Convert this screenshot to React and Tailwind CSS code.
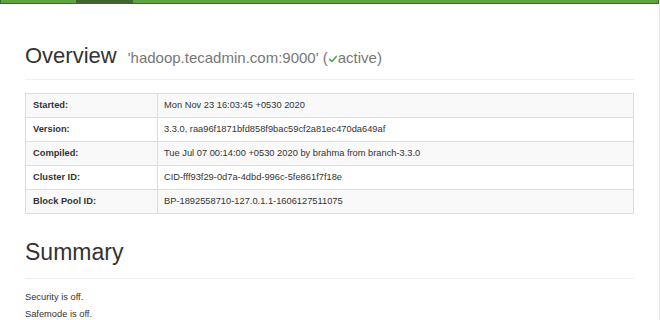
import React from "react";

const info = [
  ["Started:", "Mon Nov 23 16:03:45 +0530 2020"],
  ["Version:", "3.3.0, raa96f1871bfd858f9bac59cf2a81ec470da649af"],
  ["Compiled:", "Tue Jul 07 00:14:00 +0530 2020 by brahma from branch-3.3.0"],
  ["Cluster ID:", "CID-fff93f29-0d7a-4dbd-996c-5fe861f7f18e"],
  ["Block Pool ID:", "BP-1892558710-127.0.1.1-1606127511075"],
];

const App = () => {
  return (
    <div
      className="w-[660px] h-[320px] overflow-hidden bg-white border-r border-[#e4e4e4] text-[#333]"
      style={{ fontFamily: '"Liberation Sans", Arial, sans-serif' }}
    >
      <div className="h-[4px] flex bg-[#5fa33e] border-x border-b border-[#3d6a2b]">
        <div className="w-[75px]" />
        <div className="w-[57px] bg-[#42662f]" />
      </div>

      <div className="px-[25px]">
        <div className="mt-[40px] pb-[11px] border-b border-[#eeeeee] flex items-baseline">
          <h1 className="text-[22px] leading-[24px] font-normal">Overview</h1>
          <span className="ml-[11px] text-[15px] leading-[17px] text-[#777]">
            'hadoop.tecadmin.com:9000' (
            <svg viewBox="0 0 12 12" className="inline-block w-[10px] h-[10px] align-[-1px]">
              <path d="M2 6.5 L4.8 9 L10 3" fill="none" stroke="#4cae4c" strokeWidth="2" strokeLinecap="round" strokeLinejoin="round" />
            </svg>
            active)
          </span>
        </div>

        <table className="mt-[13px] w-full border-collapse border border-[#dddddd] text-[9.3px]">
          <tbody>
            {info.map(([label, value], i) => (
              <tr key={label} className={i % 2 === 0 ? "bg-[#f9f9f9]" : "bg-white"}>
                <th className="w-[132px] h-[24px] px-[7px] border border-[#dddddd] text-left font-bold">
                  {label}
                </th>
                <td className="h-[24px] px-[6px] border border-[#dddddd]">{value}</td>
              </tr>
            ))}
          </tbody>
        </table>

        <div className="mt-[26px] pb-[13px] border-b border-[#eeeeee]">
          <h1 className="text-[23px] leading-[25px] font-normal">Summary</h1>
        </div>

        <div className="mt-[12px] text-[9.3px] leading-[13px]">
          <p className="mb-[4px]">Security is off.</p>
          <p className="mb-[4px]">Safemode is off.</p>
        </div>
      </div>
    </div>
  );
};

export default App;
